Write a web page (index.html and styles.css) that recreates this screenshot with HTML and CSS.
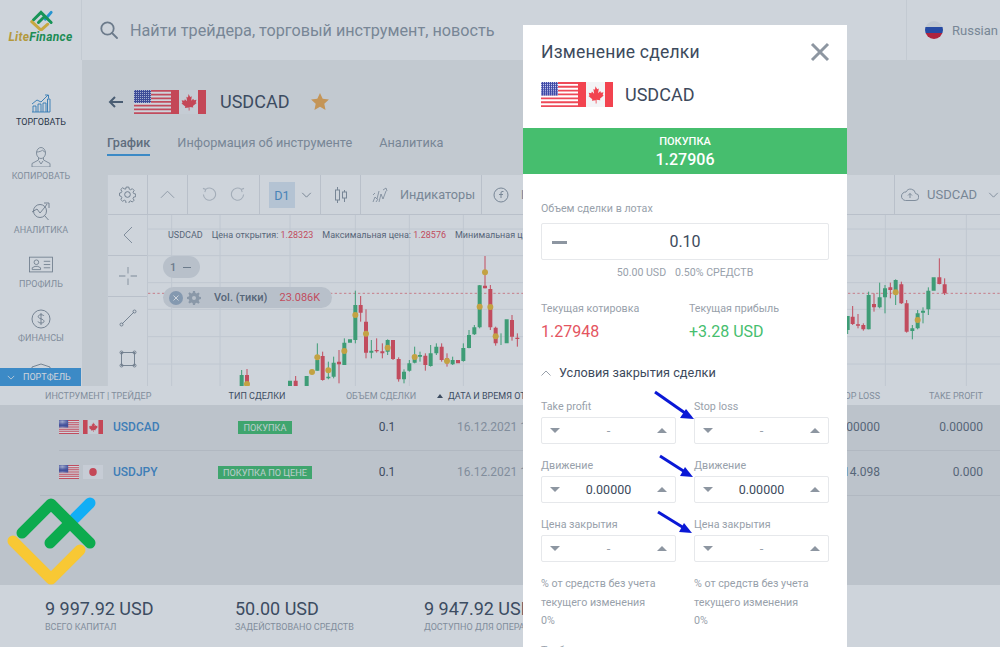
FILE: index.html
```html
<!DOCTYPE html>
<html lang="ru">
<head>
    <meta charset="UTF-8">
    <title>Изменение сделки</title>
    <link rel="stylesheet" href="styles.css">
</head>
<body>
<svg class="defs" width="0" height="0">
    <defs>
        <pattern id="stars" width="2" height="2" patternUnits="userSpaceOnUse">
            <rect width="2" height="2" fill="#3f4aa6"/>
            <rect width="1" height="1" fill="#c9cdf0"/>
        </pattern>
        <symbol id="flag-us" viewBox="0 0 37 24" preserveAspectRatio="none">
            <rect width="37" height="24" fill="#fff"/>
            <path d="M0 0h37v1.8H0zM0 3.7h37v1.8H0zM0 7.4h37v1.8H0zM0 11h37v1.8H0zM0 14.8h37v1.8H0zM0 18.5h37v1.8H0zM0 22.2h37V24H0z" fill="#ee4a58"/>
            <rect width="17" height="13" fill="url(#stars)"/>
        </symbol>
        <symbol id="flag-ca" viewBox="0 0 35 24" preserveAspectRatio="none">
            <rect width="35" height="24" fill="#f3f4f6"/>
            <rect width="8" height="24" fill="#f2434f"/>
            <rect x="27" width="8" height="24" fill="#f2434f"/>
            <path d="M17.5 4l1.7 3 1.6-.7-.7 4.4 2.2-2 .6 1.5 2.6-.4-.8 2.6 1 .6-3.8 3 .4 1.5-3.8-.5v3.6h-.8V17.500l-3.800.5.4-1.500-3.800-3 1-.6-.8-2.600 2.600.4.600-1.500 2.200 2-.7-4.400 1.600.7z" fill="#f2434f"/>
        </symbol>
        <symbol id="flag-jp" viewBox="0 0 24 16" preserveAspectRatio="none">
            <rect width="24" height="16" fill="#f5f5f7"/>
            <circle cx="12" cy="8" r="4.500" fill="#f2434f"/>
        </symbol>
    </defs>
</svg>

<div class="page">
    <header class="topbar">
        <div class="brand">
            <svg class="brand-mark" viewBox="0 0 40 26" fill="none" stroke-linecap="round">
                <path d="M25 12l7-8" stroke="#1eaaf0" stroke-width="3.500"/>
                <path d="M11 13l9-9 12 12M17 16l6-6" stroke="#0caa4f" stroke-width="3.500"/>
                <path d="M9 15l11 10 8-7" stroke="#f7c531" stroke-width="3.500"/>
            </svg>
            <div class="brand-name"><span class="brand-lite">Lite</span><span class="brand-finance">Finance</span></div>
        </div>
        <div class="search">
            <svg class="search-icon" viewBox="0 0 18 18" fill="none" stroke="#7d8894" stroke-width="1.800" stroke-linecap="round">
                <circle cx="7.500" cy="7.500" r="6.200"/>
                <path d="M12 12l5 5"/>
            </svg>
            <span>Найти трейдера, торговый инструмент, новость</span>
        </div>
        <div class="lang">
            <span class="lang-flag"></span>
            <span>Russian</span>
        </div>
    </header>

    <div class="workspace">
        <nav class="sidebar">
            <a class="side-item side-item-active">
                <svg viewBox="0 0 20 20" fill="none" stroke="#2f86c9" stroke-width=".9">
                    <path d="M1 19h18M2 19v-6h3v6M7 19v-8h3v8M12 19v-9h3v9M16.500 19V6h2.500v13"/>
                    <path d="M1 11l5-4 4 2 7-7M14 2h3.500v3.500"/>
                </svg>
                <span>Торговать</span>
            </a>
            <a class="side-item">
                <svg viewBox="0 0 20 20" fill="none" stroke="#8c97a3" stroke-width=".9">
                    <ellipse cx="10" cy="6" rx="4.500" ry="5.500"/>
                    <path d="M5.500 5c3 0 5-1 6-2 .5 1 2 2 3 2M7.500 11v2L1 16.500V20h18v-3.500L12.500 13v-2M8 14l2 3 2-3"/>
                </svg>
                <span>Копировать</span>
            </a>
            <a class="side-item">
                <svg viewBox="0 0 20 20" fill="none" stroke="#7d8894" stroke-width=".9">
                    <circle cx="9" cy="10" r="6.500"/>
                    <path d="M13.500 14.500l4 4.500M1 11l5-3 3 4 5-6 2-3M13 2h5v5"/>
                </svg>
                <span>Аналитика</span>
            </a>
            <a class="side-item">
                <svg viewBox="0 0 26 20" fill="none" stroke="#7d8894" stroke-width=".9">
                    <rect x=".5" y="1.500" width="25" height="16"/>
                    <circle cx="8" cy="7" r="2.500"/>
                    <path d="M3.500 15v-2l3-1.500h3l3 1.500v2zM16 6h7M16 9.500h7M16 13h7"/>
                </svg>
                <span>Профиль</span>
            </a>
            <a class="side-item">
                <svg viewBox="0 0 20 20" fill="none" stroke="#7d8894" stroke-width=".9">
                    <circle cx="10" cy="10" r="9"/>
                    <path d="M13 7c-.5-1.500-5.500-2-5.800.5C7 10 13 9.500 13 12.500c0 2-5.500 2-6 0M10 4v12"/>
                </svg>
                <span>Финансы</span>
            </a>
            <a class="side-item">
                <svg viewBox="0 0 20 20" fill="none" stroke="#7d8894" stroke-width=".9">
                    <path d="M1 4l9-3 9 3v14H1z"/>
                </svg>
            </a>
            <div class="portfolio-btn">
                <svg viewBox="0 0 10 6" fill="none" stroke="#fff" stroke-width="1"><path d="M1 1l4 4 4-4"/></svg>
                <span>Портфель</span>
            </div>
        </nav>

        <main class="content">
            <div class="pair">
                <svg class="back" viewBox="0 0 15 12" fill="none" stroke="#4f6174" stroke-width="2">
                    <path d="M15 6H2M7 1L2 6l5 5"/>
                </svg>
                <div class="flags flags-large">
                    <svg><use href="#flag-us"/></svg>
                    <svg><use href="#flag-ca"/></svg>
                </div>
                <span class="pair-name">USDCAD</span>
                <svg class="star" viewBox="0 0 20 19"><path d="M10 0l3 6.500 7 .8-5.200 4.700 1.400 7L10 15.500 3.800 19l1.400-7L0 7.300l7-.8z" fill="#f2ab4f"/></svg>
            </div>

            <div class="tabs">
                <a class="tab tab-active">График</a>
                <a class="tab">Информация об инструменте</a>
                <a class="tab">Аналитика</a>
            </div>

            <section class="chart">
                <div class="toolbar">
                    <div class="tool tool-gear">
                        <svg viewBox="0 0 18 18" fill="none" stroke="#7d8894">
                            <circle cx="9" cy="9" r="3"/>
                            <path d="M7.500 1h3l.5 2.300 1.500.7 2-1.200 2 2-1.200 2 .7 1.500 2.300.5v3l-2.300.5-.7 1.500 1.200 2-2 2-2-1.200-1.500.7-.5 2.300h-3L7 16.500 5.500 15.800l-2 1.200-2-2 1.200-2L2 11.500 0 10.700V7.800l2-.5.700-1.500-1.200-2 2-2 2 1.200L7 3.300z" transform="translate(.5 .2) scale(.94)"/>
                        </svg>
                    </div>
                    <div class="tool tool-chevron">
                        <svg viewBox="0 0 16 9" fill="none" stroke="#a9b0b8" stroke-width="1"><path d="M1 8l7-7 7 7"/></svg>
                    </div>
                    <div class="tool tool-history">
                        <svg viewBox="0 0 16 16" fill="none" stroke="#c6cbd1" stroke-width="1.200"><path d="M4 2.500A6.500 6.500 0 1 1 1.500 8M1 1.500l3 1-1 3"/></svg>
                        <svg viewBox="0 0 16 16" fill="none" stroke="#c6cbd1" stroke-width="1.200"><path d="M12 2.500A6.500 6.500 0 1 0 14.500 8M15 1.500l-3 1 1 3"/></svg>
                    </div>
                    <div class="tool tool-period">
                        <span class="period">D1</span>
                        <svg viewBox="0 0 12 7" fill="none" stroke="#7d8894" stroke-width="1"><path d="M1 1l5 5 5-5"/></svg>
                    </div>
                    <div class="tool tool-candles">
                        <svg viewBox="0 0 14 16" fill="none" stroke="#8c97a3" stroke-width="1"><path d="M3.500 0v16M10.500 3v12"/><rect x="1.500" y="3" width="4" height="10" fill="#fff"/><rect x="8.500" y="5" width="4" height="6" fill="#fff"/></svg>
                    </div>
                    <div class="tool tool-text tool-indicators">
                        <svg viewBox="0 0 16 16" fill="none" stroke="#8c97a3" stroke-width=".8"><path d="M1 15l2-5 2 2 2-8M7 15l2-8 2 5 3-8M11 3l3-2 1 3M1 8l2-2M4 15l2-3"/></svg>
                        <span>Индикаторы</span>
                    </div>
                    <div class="tool tool-text tool-layout">
                        <svg viewBox="0 0 16 16" fill="none" stroke="#8c97a3" stroke-width="1"><circle cx="8" cy="8" r="7"/><path d="M10.500 4.500H9q-1 0-1 1.500v5M6 7.500h4"/></svg>
                        <span>Layouts</span>
                    </div>
                    <div class="tool tool-text tool-symbol">
                        <svg viewBox="0 0 18 13" fill="none" stroke="#8c97a3" stroke-width=".9"><path d="M4.500 12.500H14a3.500 3.500 0 0 0 .5-7A5 5 0 0 0 5 4a4.200 4.200 0 0 0-.5 8.500zM9 10V5.500M7 7.500l2-2 2 2"/></svg>
                        <span>USDCAD</span>
                        <svg class="tool-caret" viewBox="0 0 12 7" fill="none" stroke="#8c97a3" stroke-width="1"><path d="M1 1l5 5 5-5"/></svg>
                    </div>
                </div>

                <div class="chart-body">
                    <div class="drawing">
                        <div class="draw-tool draw-tool-line">
                            <svg viewBox="0 0 10 18" fill="none" stroke="#8c97a3" stroke-width=".9"><path d="M9 1L1 9l8 8"/></svg>
                        </div>
                        <div class="draw-tool draw-tool-line">
                            <svg viewBox="0 0 14 14" fill="none" stroke="#b8bec5" stroke-width="1"><path d="M7 0v5M7 9v5M0 7h5M9 7h5"/></svg>
                        </div>
                        <div class="draw-tool">
                            <svg viewBox="0 0 18 18" fill="none" stroke="#7d8894" stroke-width=".9"><path d="M3 15L15 3"/><circle cx="2.500" cy="15.500" r="1.500"/><circle cx="15.500" cy="2.500" r="1.500"/></svg>
                        </div>
                        <div class="draw-tool">
                            <svg viewBox="0 0 18 18" fill="none" stroke="#7d8894" stroke-width=".9"><rect x="2.500" y="2.500" width="13" height="13"/><circle cx="2.500" cy="2.500" r="1.500"/><circle cx="15.500" cy="2.500" r="1.500"/><circle cx="2.500" cy="15.500" r="1.500"/><circle cx="15.500" cy="15.500" r="1.500"/></svg>
                        </div>
                    </div>

                    <div class="canvas">
                        <svg class="candles" viewBox="444 135 2556 513" fill="none">
                            <path stroke="#eceef1" stroke-width="3" d="M515 135V648M660 135V648M870 135V648M1066 135V648M1228 135V648M1390 135V648M2656 135V648M2899 135V648M444 177H3000M444 257H3000M444 338H3000M444 418H3000M444 500H3000M444 582H3000"/>
                            <path stroke="#f0505c" stroke-width="2" stroke-dasharray="7 7" d="M444 370H3000"/>
                            <path stroke="#3fb578" stroke-width="3" d="M725 600V648M952 520V602M985 575V628M1001 560V625M1033 505V585M1066 362V520M1114 510V565M1163 508V555M1212 598V640M1228 570V605M1244 530V580M1260 545V575M1292 525V590M1309 520V555M1358 560V585M1390 520V575M1407 480V535M1423 465V495M1439 345V475M1503 490V525M2543 438V492M2606 365V478M2639 338V415M2655 345V430M2687 328V405M2737 465V508M2753 420V478M2769 412V460M2785 352V435"/>
                            <path fill="#3fb578" d="M719 615h12v33h-12zM864 632h12v16h-12zM914 618h12v30h-12zM946 570h12v32h-12zM979 620h12v5h-12zM995 578h12v42h-12zM1027 518h12v67h-12zM1044 508h12v10h-12zM1060 405h12v105h-12zM1108 542h12v6h-12zM1157 510h12v35h-12zM1206 605h12v23h-12zM1222 580h12v22h-12zM1238 555h12v23h-12zM1254 555h12v5h-12zM1286 550h12v38h-12zM1303 530h12v20h-12zM1352 570h12v13h-12zM1384 534h12v39h-12zM1401 495h12v39h-12zM1417 472h12v21h-12zM1433 346h12v126h-12zM1514 448h12v72h-12zM2537 438h12v42h-12zM2600 375h12v103h-12zM2633 382h12v30h-12zM2649 355h12v27h-12zM2681 330h12v30h-12zM2731 475h12v8h-12zM2747 430h12v45h-12zM2763 422h12v6h-12zM2779 362h12v56h-12zM2795 322h12v40h-12z"/>
                            <path stroke="#ee4a58" stroke-width="3" d="M741 597V648M887 618V648M968 545V632M1017 540V640M1082 378V455M1098 418V565M1130 505V548M1147 520V565M1179 510V570M1196 562V635M1276 550V602M1325 520V575M1341 550V590M1455 258V355M1471 345V480M1487 470V527M1536 435V512M1552 490V530M2558 408V465M2574 432V475M2590 460V482M2622 370V425M2671 338V385M2704 335V402M2720 390V488M2818 265V343M2834 325V375"/>
                            <path fill="#ee4a58" d="M735 615h12v33h-12zM881 632h12v16h-12zM962 558h12v72h-12zM1011 575h12v8h-12zM1076 405h12v23h-12zM1092 455h12v93h-12zM1124 540h12v4h-12zM1141 544h12v6h-12zM1173 510h12v57h-12zM1190 567h12v61h-12zM1270 557h12v28h-12zM1319 530h12v40h-12zM1335 565h12v15h-12zM1368 570h12v10h-12zM1449 347h12v8h-12zM1465 357h12v115h-12zM1481 473h12v47h-12zM1530 450h12v50h-12zM1546 503h12v4h-12zM2552 440h12v22h-12zM2568 463h12v4h-12zM2584 465h12v13h-12zM2616 402h12v10h-12zM2665 352h12v8h-12zM2698 343h12v57h-12zM2714 400h12v85h-12zM2812 322h12v20h-12zM2828 343h12v27h-12z"/>
                            <g fill="#f0bd35">
                                <circle cx="741" cy="642" r="9"/><circle cx="936" cy="606" r="9"/><circle cx="952" cy="562" r="9"/><circle cx="985" cy="601" r="9"/><circle cx="1033" cy="543" r="9"/><circle cx="1066" cy="435" r="9"/><circle cx="1098" cy="491" r="9"/><circle cx="1163" cy="533" r="9"/><circle cx="1244" cy="561" r="9"/><circle cx="1341" cy="573" r="9"/><circle cx="1455" cy="307" r="9"/><circle cx="1439" cy="410" r="9"/><circle cx="1471" cy="411" r="9"/><circle cx="1487" cy="499" r="9"/><circle cx="2687" cy="367" r="9"/><circle cx="2753" cy="450" r="9"/>
                            </g>
                        </svg>
                        <div class="legend">
                            <span>USDCAD</span>
                            <span>Цена открытия: <b>1.28323</b></span>
                            <span>Максимальная цена: <b>1.28576</b></span>
                            <span>Минимальная цена: <b>1.27536</b></span>
                        </div>
                        <div class="pill pill-lots"><span>1</span><i></i></div>
                        <div class="pill pill-vol">
                            <span class="pill-close">
                                <svg viewBox="0 0 14 14"><circle cx="7" cy="7" r="7" fill="#9db0c6"/><path d="M4.500 4.500l5 5M9.500 4.500l-5 5" stroke="#fff" stroke-width="1"/></svg>
                            </span>
                            <svg class="pill-gear" viewBox="0 0 14 14"><path d="M6 0h2l.4 2 1.300.5L11.400 1.400l1.300 1.300-1 1.700.5 1.300 1.900.4v2l-1.900.4-.5 1.300 1 1.700-1.300 1.300-1.700-1-1.300.5L8 14H6l-.4-1.900-1.300-.5-1.700 1-1.300-1.300 1-1.700-.5-1.300L0 8V6l1.800-.4.500-1.300-1-1.700 1.300-1.300 1.700 1.100 1.300-.5zM7 5a2 2 0 1 0 0 4 2 2 0 0 0 0-4z" fill="#a5afbb"/></svg>
                            <span class="pill-name">Vol. (тики)</span>
                            <b>23.086K</b>
                        </div>
                    </div>
                </div>
            </section>
        </main>
    </div>

    <section class="trades">
        <div class="trade-row trade-head">
            <span class="col-name">Инструмент | трейдер</span>
            <span class="col-type col-type-head">Тип сделки</span>
            <span class="col-volume col-volume-head">Объем сделки</span>
            <span class="col-date col-date-head"><i class="sort-mark"></i>Дата и время открытия</span>
            <span class="col-num">Stop loss</span>
            <span class="col-num">Take profit</span>
        </div>
        <div class="trade-row trade-item trade-item-first">
            <span class="col-name col-symbol">
                <span class="flags flags-small">
                    <svg><use href="#flag-us"/></svg>
                    <svg><use href="#flag-ca"/></svg>
                </span>
                <a>USDCAD</a>
            </span>
            <span class="col-type"><em class="badge">Покупка</em></span>
            <span class="col-volume">0.1</span>
            <span class="col-date">16.12.2021 12:40</span>
            <span class="col-num">0.00000</span>
            <span class="col-num">0.00000</span>
        </div>
        <div class="trade-row trade-item trade-item-last">
            <span class="col-name col-symbol">
                <span class="flags flags-small">
                    <svg><use href="#flag-us"/></svg>
                    <svg><use href="#flag-jp"/></svg>
                </span>
                <a>USDJPY</a>
            </span>
            <span class="col-type"><em class="badge">Покупка по цене</em></span>
            <span class="col-volume">0.1</span>
            <span class="col-date">16.12.2021 12:41</span>
            <span class="col-num">114.098</span>
            <span class="col-num">0.000</span>
        </div>
    </section>

    <footer class="totals">
        <div class="total total-capital"><strong>9 997.92 USD</strong><span>Всего капитал</span></div>
        <div class="total total-used"><strong>50.00 USD</strong><span>Задействовано средств</span></div>
        <div class="total"><strong>9 947.92 USD</strong><span>Доступно для операций</span></div>
    </footer>

    <div class="dim"></div>

    <aside class="modal">
        <div class="modal-head">
            <h2>Изменение сделки</h2>
            <svg class="modal-close" viewBox="0 0 20 20" fill="none" stroke="#8d96a1" stroke-width="3"><path d="M2 2l16 16M18 2L2 18"/></svg>
        </div>
        <div class="modal-pair">
            <div class="flags flags-modal">
                <svg><use href="#flag-us"/></svg>
                <svg><use href="#flag-ca"/></svg>
            </div>
            <span>USDCAD</span>
        </div>
        <div class="deal-side">
            <span>Покупка</span>
            <strong>1.27906</strong>
        </div>
        <div class="modal-body">
            <label class="lot-label">Объем сделки в лотах</label>
            <div class="lot-input"><i class="lot-minus"></i><span>0.10</span></div>
            <div class="lot-note"><span>50.00 USD</span><span>0.50% средств</span></div>

            <div class="quotes">
                <div><label>Текущая котировка</label><p class="quote-red">1.27948</p></div>
                <div><label>Текущая прибыль</label><p class="quote-green">+3.28 USD</p></div>
            </div>

            <div class="close-title">
                <svg viewBox="0 0 10 6" fill="none" stroke="#8d96a1" stroke-width=".9"><path d="M.5 5.500L5 1l4.500 4.500"/></svg>
                <span>Условия закрытия сделки</span>
            </div>

            <div class="close-grid">
                <div class="field"><label>Take profit</label><div class="stepper"><i class="tri tri-down"></i><span>-</span><i class="tri tri-up"></i></div></div>
                <div class="field"><label>Stop loss</label><div class="stepper"><i class="tri tri-down"></i><span>-</span><i class="tri tri-up"></i></div></div>
                <div class="field"><label>Движение</label><div class="stepper"><i class="tri tri-down"></i><span class="stepper-value">0.00000</span><i class="tri tri-up"></i></div></div>
                <div class="field"><label>Движение</label><div class="stepper"><i class="tri tri-down"></i><span class="stepper-value">0.00000</span><i class="tri tri-up"></i></div></div>
                <div class="field"><label>Цена закрытия</label><div class="stepper"><i class="tri tri-down"></i><span>-</span><i class="tri tri-up"></i></div></div>
                <div class="field"><label>Цена закрытия</label><div class="stepper"><i class="tri tri-down"></i><span>-</span><i class="tri tri-up"></i></div></div>
                <p class="percent">% от средств без учета текущего изменения<br>0%</p>
                <p class="percent">% от средств без учета текущего изменения<br>0%</p>
            </div>
            <label class="margin-label">Требуемая маржа</label>
        </div>
    </aside>

    <svg class="marks" viewBox="0 0 1000 647" fill="none">
        <g stroke="#0a18d6" stroke-width="3" fill="#0a18d6">
            <path d="M655 392l30 21"/><path d="M694 419l-14-1 6-9z" stroke="none"/>
            <path d="M660 456l25 16"/><path d="M693 477l-13-1 5-9z" stroke="none"/>
            <path d="M658 512l26 16"/><path d="M692 533l-13-1 5-9z" stroke="none"/>
        </g>
        <g stroke-width="11" stroke-linecap="round" stroke-linejoin="round">
            <path d="M75 518l15-15" stroke="#12aef5"/>
            <path d="M22 533l29-29 39 39M50 543l20-20" stroke="#0cab4e"/>
            <path d="M13 541l38 38 29-29" stroke="#f8c834"/>
        </g>
    </svg>
</div>
</body>
</html>
```

FILE: styles.css
```css
* {
    box-sizing: border-box;
}
html, body {
    margin: 0;
    height: 100%;
    overflow: hidden;
}
body {
    font-family: 'Roboto', 'Liberation Sans', sans-serif;
    color: #3d4a5c;
    background: #fff;
}
.defs {
    position: absolute;
}
.page {
    position: relative;
    display: flex;
    flex-direction: column;
    width: 1000px;
    height: 647px;
    overflow: hidden;
}

/* top bar */
.topbar {
    display: flex;
    height: 60px;
    flex: none;
    background: #fff;
}
.brand {
    width: 82px;
    flex: none;
    display: flex;
    flex-direction: column;
    align-items: center;
    padding-top: 9px;
    border-right: 1px solid #f1f2f3;
}
.brand-mark {
    width: 40px;
    height: 22px;
}
.brand-name {
    font-size: 12px;
    font-weight: 700;
    font-style: italic;
    line-height: 13px;
    letter-spacing: .3px;
    white-space: nowrap;
}
.brand-lite {
    color: #dcb02a;
}
.brand-finance {
    color: #13a04c;
}
.search {
    flex: 1;
    display: flex;
    align-items: center;
    gap: 12px;
    padding-left: 18px;
    font-size: 16.200px;
    color: #8c97a3;
}
.search-icon {
    width: 18px;
    height: 18px;
}
.lang {
    width: 94px;
    flex: none;
    display: flex;
    align-items: center;
    gap: 9px;
    padding-left: 18px;
    border-left: 1px solid #f1f2f3;
    font-size: 13px;
    color: #8c97a3;
    white-space: nowrap;
}
.lang-flag {
    width: 18px;
    height: 18px;
    flex: none;
    border-radius: 50%;
    background: linear-gradient(#eef0f3 33%, #1f47b4 33%, #1f47b4 66%, #d5142f 66%);
}

/* workspace */
.workspace {
    display: flex;
    height: 326px;
    flex: none;
    overflow: hidden;
    background: #eff0f1;
}
.sidebar {
    position: relative;
    width: 82px;
    flex: none;
    padding-top: 33px;
    overflow: hidden;
    background: #fff;
}
.side-item {
    display: flex;
    flex-direction: column;
    align-items: center;
    height: 54px;
    font-size: 9px;
    line-height: 11px;
    text-transform: uppercase;
    color: #98a1ab;
}
.side-item svg {
    height: 20px;
    width: 24px;
    margin-bottom: 4px;
}
.side-item-active {
    color: #222c38;
}
.portfolio-btn {
    position: absolute;
    left: 0;
    bottom: 0;
    display: flex;
    align-items: center;
    gap: 8px;
    width: 81px;
    height: 18px;
    padding-left: 7px;
    background: #3d9ce3;
    color: #fff;
    font-size: 9px;
    text-transform: uppercase;
}
.portfolio-btn svg {
    width: 8px;
    height: 5px;
}
.content {
    flex: 1;
    min-width: 0;
    display: flex;
    flex-direction: column;
    padding: 29px 0 0 25px;
}
.pair {
    display: flex;
    align-items: center;
    height: 25px;
    flex: none;
}
.back {
    width: 15px;
    height: 12px;
    margin: 0 11px 0 1px;
}
.flags {
    display: flex;
}
.flags svg {
    display: block;
}
.flags-large svg {
    height: 24px;
}
.flags-large svg:first-child {
    width: 37px;
}
.flags-large svg:last-child {
    width: 35px;
}
.pair-name {
    margin-left: 14px;
    font-size: 18px;
}
.star {
    width: 18px;
    height: 17px;
    margin-left: 22px;
}
.tabs {
    display: flex;
    gap: 27px;
    height: 30px;
    margin-top: 18px;
    flex: none;
    font-size: 12.700px;
    line-height: 22px;
    color: #8c97a3;
}
.tab-active {
    height: 24px;
    font-weight: 500;
    color: #6c7783;
    border-bottom: 2px solid #3d9ce3;
}

/* chart */
.chart {
    flex: 1;
    min-height: 0;
    margin-top: 13px;
    display: flex;
    flex-direction: column;
    background: #fff;
    border-left: 1px solid #f1f2f3;
}
.toolbar {
    display: flex;
    height: 40px;
    flex: none;
    border-bottom: 1px solid #e3e5e8;
    color: #8c97a3;
    font-size: 12.700px;
}
.tool {
    display: flex;
    align-items: center;
    justify-content: center;
    height: 39px;
    border-right: 1px solid #e3e5e8;
}
.tool-gear {
    width: 40px;
}
.tool-gear svg {
    width: 17px;
    height: 17px;
}
.tool-chevron {
    width: 40px;
}
.tool-chevron svg {
    width: 15px;
    height: 9px;
}
.tool-history {
    width: 72px;
    gap: 13px;
}
.tool-history svg {
    width: 15px;
    height: 15px;
}
.tool-period {
    width: 61px;
    gap: 6px;
    justify-content: flex-start;
    padding-left: 9px;
}
.period {
    width: 26px;
    height: 26px;
    background: #dce9f5;
    color: #4e94d0;
    text-align: center;
    line-height: 27px;
}
.tool-period svg {
    width: 11px;
    height: 6px;
}
.tool-candles {
    width: 40px;
}
.tool-candles svg {
    width: 14px;
    height: 16px;
}
.tool-text {
    gap: 12px;
    padding: 0 11px;
}
.tool-indicators {
    width: 121px;
    justify-content: flex-start;
}
.tool-text svg {
    width: 16px;
    height: 16px;
    flex: none;
}
.tool-layout {
    padding-right: 30px;
    border-right: 0;
}
.tool-symbol {
    margin-left: auto;
    width: 106px;
    padding: 0 0 0 6px;
    gap: 8px;
    justify-content: flex-start;
    border-right: 0;
    border-left: 1px solid #e3e5e8;
    font-size: 13px;
}
.tool-symbol svg {
    width: 18px;
    height: 13px;
}
.tool-symbol .tool-caret {
    width: 11px;
    height: 6px;
    margin-left: 3px;
}
.chart-body {
    flex: 1;
    min-height: 0;
    display: flex;
}
.drawing {
    width: 40px;
    flex: none;
    border-right: 1px solid #eceef1;
}
.draw-tool {
    display: flex;
    align-items: center;
    justify-content: center;
    height: 41px;
}
.draw-tool-line {
    border-bottom: 1px solid #e3e5e8;
}
.draw-tool svg {
    width: 18px;
    height: 18px;
}
.canvas {
    position: relative;
    flex: 1;
    min-width: 0;
}
.candles {
    display: block;
    width: 852px;
    height: 171px;
}
.legend {
    position: absolute;
    left: 20px;
    top: 15px;
    display: flex;
    gap: 9px;
    font-size: 9px;
    line-height: 11px;
    color: #5f6c7b;
    white-space: nowrap;
}
.legend b {
    font-weight: 400;
    color: #ee4a58;
}
.pill {
    position: absolute;
    display: flex;
    align-items: center;
    border-radius: 12px;
    background: #e2e5e9;
    font-size: 11px;
}
.pill-lots {
    left: 15px;
    top: 41px;
    width: 37px;
    height: 22px;
    padding-left: 7px;
    gap: 7px;
    font-weight: 500;
    color: #7d8894;
}
.pill-lots i {
    width: 8px;
    height: 1px;
    background: #7d8894;
}
.pill-vol {
    left: 15px;
    top: 72px;
    width: 169px;
    height: 21px;
    padding-left: 6px;
}
.pill-close {
    display: flex;
}
.pill-close svg {
    width: 14px;
    height: 14px;
}
.pill-gear {
    width: 14px;
    height: 14px;
    margin-left: 4px;
}
.pill-name {
    margin-left: 13px;
    font-weight: 500;
    color: #5f6c7b;
}
.pill-vol b {
    margin-left: 12px;
    font-weight: 400;
    color: #ee4a58;
}

/* trades table */
.trades {
    flex: 1;
    background: #e7e8ea;
}
.trade-row {
    display: grid;
    grid-template-columns: 200px 130px 100px 340px 110px 103px;
    align-items: center;
}
.trade-head {
    height: 19px;
    padding-top: 1px;
    background: #fff;
    font-size: 9px;
    text-transform: uppercase;
    color: #98a1ab;
}
.col-name {
    padding-left: 45px;
}
.col-type {
    text-align: center;
    color: #3d4a5c;
}
.col-type-head {
    padding-right: 16px;
}
.col-volume {
    text-align: center;
    font-size: 12px;
    padding-left: 14px;
}
.col-volume-head {
    font-size: 9px;
    padding: 0 0 0 2px;
}
.col-date {
    padding-left: 27px;
    font-size: 12px;
    color: #98a1ab;
    white-space: nowrap;
}
.col-date-head {
    padding-left: 7px;
    font-size: 9px;
    color: #3d4a5c;
}
.sort-mark {
    display: inline-block;
    margin-right: 5px;
    border: 3px solid transparent;
    border-top: 0;
    border-bottom: 4px solid #3d4a5c;
    vertical-align: 1px;
}
.col-num {
    text-align: right;
    font-size: 12px;
    color: #5f6c7b;
}
.trade-head .col-num {
    font-size: 9px;
    color: #98a1ab;
}
.trade-item {
    position: relative;
    font-size: 12px;
    color: #3d4a5c;
}
.trade-item::after {
    content: "";
    position: absolute;
    right: 0;
    bottom: 0;
    height: 1px;
    background: #d8dadd;
}
.trade-item-first {
    height: 46px;
    padding-bottom: 3px;
}
.trade-item-first::after {
    left: 59px;
}
.trade-item-last {
    height: 45px;
    padding-bottom: 4px;
}
.trade-item-last::after {
    left: 40px;
}
.col-symbol {
    display: flex;
    align-items: center;
    padding-left: 59px;
    gap: 10px;
}
.col-symbol a {
    font-weight: 500;
    color: #3f8ccf;
}
.flags-small {
    gap: 4px;
}
.flags-small svg {
    width: 20px;
    height: 14px;
}
.badge {
    display: inline-block;
    padding: 0 5px;
    background: #41c06e;
    color: #e6f6ec;
    font-size: 9.200px;
    font-style: normal;
    line-height: 13px;
    text-transform: uppercase;
}
.totals {
    height: 62px;
    flex: none;
    display: flex;
    padding: 14px 0 0 45px;
    background: #fff;
}
.total {
    display: flex;
    flex-direction: column;
    white-space: nowrap;
}
.total-capital {
    width: 190px;
}
.total-used {
    width: 189px;
}
.total strong {
    font-size: 18px;
    font-weight: 400;
    line-height: 20px;
}
.total span {
    font-size: 9px;
    line-height: 16px;
    text-transform: uppercase;
    color: #98a1ab;
}

/* dimmed layer under the dialog */
.dim {
    position: absolute;
    inset: 0;
    background: rgba(60, 83, 111, .25);
}

/* dialog */
.modal {
    position: absolute;
    left: 523px;
    top: 25px;
    width: 324px;
    height: 622px;
    overflow: hidden;
    background: #fff;
}
.modal-head {
    display: flex;
    align-items: center;
    justify-content: space-between;
    padding: 17px 17px 0 18px;
}
.modal-head h2 {
    margin: 0;
    font-size: 17.500px;
    font-weight: 400;
    line-height: 20px;
    letter-spacing: .2px;
}
.modal-close {
    width: 20px;
    height: 20px;
}
.modal-pair {
    display: flex;
    align-items: center;
    gap: 12px;
    margin: 20px 0 21px 18px;
    height: 25px;
    font-size: 18px;
}
.flags-modal svg {
    height: 25px;
}
.flags-modal svg:first-child {
    width: 37px;
}
.flags-modal svg:last-child {
    width: 35px;
}
.deal-side {
    display: flex;
    flex-direction: column;
    align-items: center;
    height: 46px;
    padding-top: 7px;
    background: #46be6e;
    color: #fff;
}
.deal-side span {
    font-size: 11px;
    font-weight: 500;
    line-height: 14px;
    text-transform: uppercase;
}
.deal-side strong {
    font-size: 16px;
    font-weight: 500;
    line-height: 21px;
}
.modal-body {
    padding: 28px 18px 0;
    font-size: 10.700px;
    color: #98a1ab;
}
.modal-body label {
    display: block;
    line-height: 14px;
}
.lot-input {
    position: relative;
    display: flex;
    align-items: center;
    justify-content: center;
    height: 37px;
    margin-top: 7px;
    border: 1px solid #e6e8eb;
    border-radius: 2px;
    font-size: 16px;
    color: #3d4a5c;
}
.lot-minus {
    position: absolute;
    left: 10px;
    top: 17px;
    width: 15px;
    height: 3px;
    background: #8d96a1;
}
.lot-note {
    display: flex;
    justify-content: center;
    gap: 9px;
    margin-top: 7px;
    font-size: 10.600px;
    line-height: 12px;
    text-transform: uppercase;
}
.quotes {
    display: grid;
    grid-template-columns: 148px 1fr;
    margin-top: 23px;
}
.quotes p {
    margin: 6px 0 0;
    font-size: 16px;
    line-height: 20px;
}
.quote-red {
    color: #e4555f;
}
.quote-green {
    color: #46be6e;
}
.close-title {
    display: flex;
    align-items: center;
    gap: 8px;
    margin-top: 23px;
    font-size: 12.700px;
    line-height: 16px;
    color: #3d4a5c;
}
.close-title svg {
    width: 10px;
    height: 6px;
}
.close-grid {
    display: grid;
    grid-template-columns: 135px 135px;
    column-gap: 18px;
    row-gap: 15px;
    margin-top: 19px;
}
.field label {
    line-height: 14px;
}
.stepper {
    display: flex;
    align-items: center;
    justify-content: space-between;
    height: 27px;
    margin-top: 3px;
    padding: 0 8px;
    border: 1px solid #e6e8eb;
    border-radius: 2px;
    color: #98a1ab;
    font-size: 13px;
}
.stepper-value {
    color: #3d4a5c;
    font-size: 12.500px;
}
.tri {
    width: 0;
    height: 0;
    border: 5px solid transparent;
}
.tri-down {
    border-top: 5px solid #8d96a1;
    border-bottom: 0;
}
.tri-up {
    border-bottom: 5px solid #8d96a1;
    border-top: 0;
}
.percent {
    margin: -2px 0 0;
    line-height: 18.500px;
}
.margin-label {
    margin-top: 13px;
}

/* blue arrows and the big logo drawn on top of the shot */
.marks {
    position: absolute;
    inset: 0;
    width: 1000px;
    height: 647px;
    pointer-events: none;
}
```
